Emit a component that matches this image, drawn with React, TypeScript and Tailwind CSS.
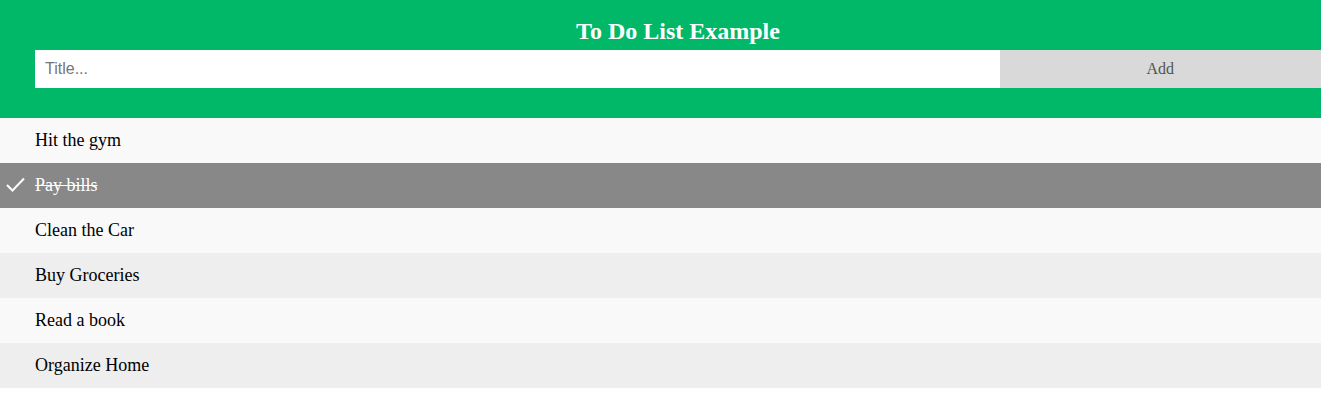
import React, { useState } from "react";

interface Todo {
  title: string;
  done: boolean;
}

const initialTodos: Todo[] = [
  { title: "Hit the gym", done: false },
  { title: "Pay bills", done: true },
  { title: "Clean the Car", done: false },
  { title: "Buy Groceries", done: false },
  { title: "Read a book", done: false },
  { title: "Organize Home", done: false },
];

const App: React.FC = () => {
  const [todos, setTodos] = useState<Todo[]>(initialTodos);
  const [title, setTitle] = useState("");

  const addTodo = () => {
    if (!title.trim()) return;
    setTodos([...todos, { title, done: false }]);
    setTitle("");
  };

  const toggle = (index: number) => {
    setTodos(todos.map((t, i) => (i === index ? { ...t, done: !t.done } : t)));
  };

  return (
    <div className="min-h-[414px] bg-white font-['Liberation_Serif',serif]">
      <div className="bg-[#00b868] pl-[35px] pt-[17px] pb-[30px]">
        <h2 className="mb-[5px] text-center text-[24px] font-bold leading-[28px] text-white">
          To Do List Example
        </h2>
        <div className="flex">
          <input
            value={title}
            onChange={(e) => setTitle(e.target.value)}
            placeholder="Title..."
            className="h-[38px] w-3/4 bg-white px-[10px] font-['Liberation_Sans',sans-serif] text-[16px] text-black outline-none placeholder:text-[#757575]"
          />
          <button
            onClick={addTodo}
            className="h-[38px] w-1/4 bg-[#d9d9d9] text-[16px] text-[#555]"
          >
            Add
          </button>
        </div>
      </div>

      <ul>
        {todos.map((todo, index) => {
          const bg = todo.done
            ? "bg-[#888] text-white line-through"
            : index % 2 === 0
            ? "bg-[#f9f9f9] text-black"
            : "bg-[#eee] text-black";
          return (
            <li
              key={index}
              onClick={() => toggle(index)}
              className={`relative h-[45px] cursor-pointer pl-[35px] text-[18px] leading-[45px] ${bg}`}
            >
              {/* checkmark on done items */}
              {todo.done && (
                <svg
                  className="absolute left-[6px] top-[14px]"
                  width="19"
                  height="15"
                  viewBox="0 0 19 15"
                  fill="none"
                  stroke="white"
                  strokeWidth="2"
                >
                  <path d="M1 8 L6.5 13.5 L18 1.5" />
                </svg>
              )}
              {todo.title}
            </li>
          );
        })}
      </ul>
    </div>
  );
};

export default App;
